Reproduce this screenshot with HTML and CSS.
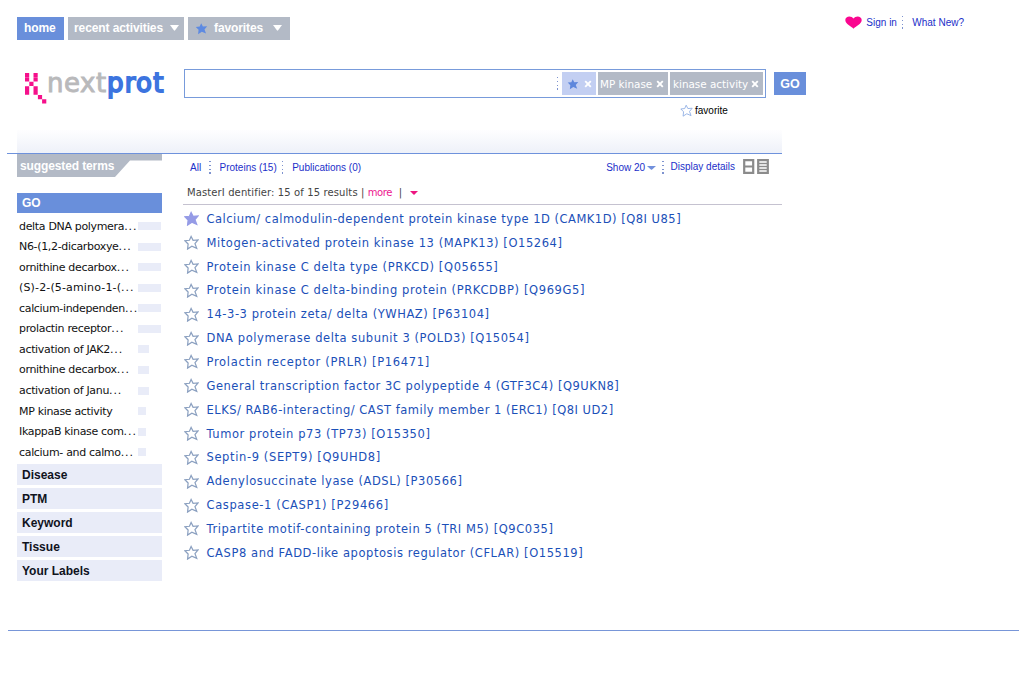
FILE: index.html
```html
<!DOCTYPE html>
<html lang="en">
<head>
<meta charset="utf-8">
<title>nextprot</title>
<link rel="stylesheet" href="styles.css">
</head>
<body>
<svg class="defs" width="0" height="0">
  <symbol id="star" viewBox="0 0 16 16"><path d="M7.6 1.5 9.7 5.6 15 5.2 11.7 9.2 13.6 14.3 8.4 12 3.8 15 4.4 9.6 1 6.1 5.8 5.6Z"/></symbol>
  <symbol id="cross" viewBox="0 0 8 8"><path d="M1.2 1.2 6.8 6.8M6.8 1.2 1.2 6.8"/></symbol>
  <symbol id="down" viewBox="0 0 10 6" preserveAspectRatio="none"><path d="M0 0H10L5.7 5.3Q5 6 4.3 5.3Z"/></symbol>
</svg>
<div class="top">
  <nav class="tabs">
    <a class="tab home">home</a>
    <a class="tab recent">recent activities<svg class="caret"><use href="#down"/></svg></a>
    <a class="tab favs"><svg class="tab-star"><use href="#star"/></svg>favorites<svg class="caret"><use href="#down"/></svg></a>
  </nav>
  <div class="account">
    <svg class="heart" viewBox="0 0 17 13"><path d="M8.5 12.7C6.5 10.6.3 8 .3 4.1.3-.2 6.5-.7 8.5 2.6 10.5-.7 16.7-.2 16.7 4.1 16.7 8 10.5 10.6 8.5 12.7Z"/></svg>
    <a class="signin">Sign in</a><i class="dots"></i><a class="whatnew">What New?</a>
  </div>
</div>
<header class="header">
  <div class="logo">
    <svg class="mark" viewBox="0 0 22 32"><path d="M0 0h4.2v4.2H0zM8.5 0h4.2v4.2h-4.2zM0 4.4h4.2v4.2H0zM8.5 4.4h4.2v4.2h-4.2zM4.3 8.8h4.2v4.2h-4.2zM0 13.2h4.2v4.2H0zM8.5 13.2h4.2v4.2h-4.2zM0 17.6h4.2v4.2H0zM8.5 17.6h4.2v4.2h-4.2zM12.9 22h4.2v4.2h-4.2zM17.1 26.2h4.2v4.2h-4.2z"/></svg>
    <span class="next">next</span><span class="prot">prot</span>
  </div>
  <div class="search">
    <div class="box">
      <i class="dots"></i>
      <span class="chip fav"><svg class="chip-star"><use href="#star"/></svg><svg class="x"><use href="#cross"/></svg></span>
      <span class="chip mp"><b>MP kinase</b><svg class="x"><use href="#cross"/></svg></span>
      <span class="chip ka"><b>kinase activity</b><svg class="x"><use href="#cross"/></svg></span>
    </div>
    <div class="favorite"><svg><use href="#star"/></svg>favorite</div>
  </div>
  <a class="go">GO</a>
</header>
<div class="band"></div>
<main class="main">
  <aside class="side">
    <div class="suggested"><svg viewBox="0 0 145 23"><path d="M0 0H145V6.5H113L98 23H0Z"/></svg><span>suggested terms</span></div>
    <h2 class="cat active">GO</h2>
    <ul class="terms">
      <li><span>delta DNA polymera<b>...</b></span><i class="bar l"></i></li>
      <li><span>N6-(1,2-dicarboxye<b>...</b></span><i class="bar l"></i></li>
      <li><span>ornithine decarbox<b>...</b></span><i class="bar l"></i></li>
      <li class="wide"><span>(S)-2-(5-amino-1-(<b>...</b></span><i class="bar l"></i></li>
      <li><span>calcium-independen<b>...</b></span><i class="bar l"></i></li>
      <li><span>prolactin receptor<b>...</b></span><i class="bar l"></i></li>
      <li><span>activation of JAK2<b>...</b></span><i class="bar m"></i></li>
      <li><span>ornithine decarbox<b>...</b></span><i class="bar m"></i></li>
      <li><span>activation of Janu<b>...</b></span><i class="bar m"></i></li>
      <li><span>MP kinase activity</span><i class="bar s"></i></li>
      <li><span>IkappaB kinase com<b>...</b></span><i class="bar s"></i></li>
      <li><span>calcium- and calmo<b>...</b></span><i class="bar s"></i></li>
    </ul>
    <h2 class="cat">Disease</h2>
    <h2 class="cat">PTM</h2>
    <h2 class="cat">Keyword</h2>
    <h2 class="cat">Tissue</h2>
    <h2 class="cat">Your Labels</h2>
  </aside>
  <section class="content">
    <div class="filters">
      <a>All</a><i class="dots d1"></i><a>Proteins (15)</a><i class="dots d2"></i><a>Publications (0)</a>
      <a class="show">Show 20</a><svg class="show-caret"><use href="#down"/></svg><i class="dots d3"></i><a class="details">Display details</a>
      <svg class="views" viewBox="0 0 26 15"><path d="M1.2 1.2H10.2V13.8H1.2ZM1.2 7.5H10.2M15.2 1.2H24.8V13.8H15.2Z"/><path class="thin" d="M15.2 4.5H24.8M15.2 7.5H24.8M15.2 10.5H24.8"/></svg>
    </div>
    <div class="summary">MasterI dentifier: 15 of 15 results | <em>more</em>  |<svg><use href="#down"/></svg></div>
    <ul class="results">
      <li class="on"><svg><use href="#star"/></svg><a>Calcium/ calmodulin-dependent protein kinase type 1D (CAMK1D) [Q8I U85]</a></li>
      <li><svg><use href="#star"/></svg><a>Mitogen-activated protein kinase 13 (MAPK13) [O15264]</a></li>
      <li><svg><use href="#star"/></svg><a>Protein kinase C delta type (PRKCD) [Q05655]</a></li>
      <li><svg><use href="#star"/></svg><a>Protein kinase C delta-binding protein (PRKCDBP) [Q969G5]</a></li>
      <li><svg><use href="#star"/></svg><a>14-3-3 protein zeta/ delta (YWHAZ) [P63104]</a></li>
      <li><svg><use href="#star"/></svg><a>DNA polymerase delta subunit 3 (POLD3) [Q15054]</a></li>
      <li><svg><use href="#star"/></svg><a>Prolactin receptor (PRLR) [P16471]</a></li>
      <li><svg><use href="#star"/></svg><a>General transcription factor 3C polypeptide 4 (GTF3C4) [Q9UKN8]</a></li>
      <li><svg><use href="#star"/></svg><a>ELKS/ RAB6-interacting/ CAST family member 1 (ERC1) [Q8I UD2]</a></li>
      <li><svg><use href="#star"/></svg><a>Tumor protein p73 (TP73) [O15350]</a></li>
      <li><svg><use href="#star"/></svg><a>Septin-9 (SEPT9) [Q9UHD8]</a></li>
      <li><svg><use href="#star"/></svg><a>Adenylosuccinate lyase (ADSL) [P30566]</a></li>
      <li><svg><use href="#star"/></svg><a>Caspase-1 (CASP1) [P29466]</a></li>
      <li><svg><use href="#star"/></svg><a>Tripartite motif-containing protein 5 (TRI M5) [Q9C035]</a></li>
      <li><svg><use href="#star"/></svg><a>CASP8 and FADD-like apoptosis regulator (CFLAR) [O15519]</a></li>
    </ul>
  </section>
</main>
<footer class="footer"></footer>
</body>
</html>
```

FILE: styles.css
```css
* { box-sizing: border-box; }
body { margin: 0; width: 1024px; height: 683px; overflow: hidden; background: #fff; font-family: "Liberation Sans", Arial, sans-serif; color: #111; }
ul, h2 { margin: 0; padding: 0; list-style: none; }
a, span, b { white-space: nowrap; }
svg { flex: none; display: block; }
.defs { position: absolute; }
.dots { flex: none; width: 1.4px; height: 13px; background: repeating-linear-gradient(#7e93cf 0 1.4px, transparent 1.4px 3.8px); }

.top { display: flex; justify-content: space-between; height: 69px; padding: 17px 60px 0 17px; }
.tabs { display: flex; height: 23px; gap: 4px; }
.tab { display: flex; align-items: center; padding: 0 0 1px 7px; background: #b3bac6; color: #fff; font-weight: bold; font-size: 12px; letter-spacing: -.1px; }
.home { width: 47px; background: #698fdb; }
.recent { width: 116px; padding-left: 6px; }
.favs { width: 102px; }
.caret { width: 9px; height: 6px; margin-left: auto; margin-right: 5px; fill: #fff; }
.favs .caret { margin-right: 8px; }
.tab-star { width: 13px; height: 13px; margin-right: 6px; fill: #5d8ae2; }
.account { display: flex; align-items: center; height: 11px; font-size: 10px; color: #1b2fc9; }
.heart { width: 17px; height: 13px; margin-right: 4px; fill: #fa0790; }
.account .dots { margin: 0 9px 0 5px; }

.header { display: flex; height: 61px; padding-left: 25px; }
.logo { display: flex; width: 159px; font: 26px/26px "DejaVu Sans", sans-serif; }
.mark { width: 22px; height: 32px; margin: 4px 0 0; fill: #f5108b; }
.next { width: 60px; color: #b9b9bb; -webkit-text-stroke: .9px #b9b9bb; letter-spacing: .5px; }
.prot { color: #3c74df; -webkit-text-stroke: 1.8px #3c74df; letter-spacing: 1.2px; }
.next, .prot { stroke-linejoin: round; padding-top: 1px; }
.search { width: 582px; }
.box { display: flex; align-items: center; justify-content: flex-end; height: 29px; padding-right: 2px; border: 1px solid #789bdb; gap: 2px; }
.box .dots { margin-right: 2px; }
.chip { display: flex; align-items: center; justify-content: space-between; height: 23px; padding: 0 4px 0 2px; background: #b3bac6; color: #fff; font: 10.4px "DejaVu Sans", sans-serif; }
.chip b { font-weight: normal; }
.fav { width: 34px; background: #c3cff2; padding-left: 5px; }
.mp { width: 70px; }
.ka { width: 93px; padding-left: 3px; }
.chip-star { width: 12px; height: 12px; fill: #5e87dc; }
.x { width: 8px; height: 8px; stroke: #fff; stroke-width: 1.9; }
.favorite { display: flex; align-items: center; height: 14px; margin: 5px 0 0 496px; font-size: 10px; color: #000; }
.favorite svg { width: 13px; height: 13px; margin-right: 2px; fill: #fff; stroke: #86a8e2; stroke-width: 1; }
.go { width: 32px; height: 23px; margin: 3px 0 0 8px; background: #698fdb; color: #fff; font: bold 12.5px/24px "Liberation Sans", sans-serif; text-align: center; }

.band { width: 775px; height: 24px; margin-left: 7px; border-bottom: 1px solid #6e92dc; background: linear-gradient(#fefeff, #eef1f9) 10px 0 no-repeat; }
.main { display: flex; height: 476px; padding-left: 17px; }
.side { width: 145px; margin-right: 21px; }
.suggested { display: grid; height: 23px; margin-bottom: 16px; }
.suggested > * { grid-area: 1 / 1; }
.suggested svg { width: 145px; height: 23px; fill: #b3bac6; }
.suggested span { padding-left: 3px; color: #fff; font: bold 12px/24px "Liberation Sans", sans-serif; letter-spacing: -.12px; }
.cat { height: 21px; margin-bottom: 3px; padding-left: 5px; background: #e9ecf8; font: bold 12px/23px "Liberation Sans", sans-serif; color: #10131d; }
.cat.active { height: 20px; margin: 0 0 3px; background: #698fdb; color: #fff; line-height: 21px; }
.terms { height: 248px; font: 11px "DejaVu Sans", sans-serif; letter-spacing: -.33px; color: #111; }
.terms li { display: flex; align-items: center; height: 20.54px; padding-left: 2px; }
.terms .wide { letter-spacing: .15px; }
.terms span { width: 119px; }
.terms b { font-weight: normal; letter-spacing: .9px; }
.bar { height: 8px; background: #e9ecf8; }
.bar.l { width: 23px; }
.bar.m { width: 11px; }
.bar.s { width: 7.5px; }

.content { width: 599px; }
.filters { display: flex; align-items: center; height: 27px; padding-left: 7px; font-size: 10px; color: #1b2fc9; }
.d1 { margin: 0 9px 0 8px; }
.d2 { margin: 0 9px 0 5px; }
.show { margin-left: auto; }
.show-caret { width: 9px; height: 4px; margin-left: 2px; fill: #7290dc; }
.d3 { margin: 0 7px 0 6px; }
.views { width: 26px; height: 15px; margin: -3px 13px 0 8px; fill: none; stroke: #8b8b8b; stroke-width: 2.2; }
.views .thin { stroke-width: 1.4; }
.details { margin-top: -2px; }
.summary { display: flex; align-items: center; height: 24px; padding-left: 4px; border-bottom: 1px solid #c5c2d0; font: 10px "DejaVu Sans", sans-serif; letter-spacing: .11px; color: #444; white-space: pre; }
.summary em { font-style: normal; color: #ed1590; letter-spacing: -.4px; }
.summary svg { width: 8px; height: 4px; margin-left: 8px; fill: #ed1580; }
.results { padding-top: 2px; font: 11.5px "DejaVu Sans", sans-serif; letter-spacing: .57px; color: #1b50b8; }
.results li { display: flex; align-items: center; height: 23.85px; padding-left: 1px; }
.results li:nth-child(1), .results li:nth-child(9) { letter-spacing: .5px; }
.results li:nth-child(8) { letter-spacing: .53px; }
.results li:nth-child(3), .results li:nth-child(4), .results li:nth-child(11), .results li:nth-child(13) { letter-spacing: .62px; }
.results li:nth-child(7) { letter-spacing: .69px; }
.results svg { width: 15px; height: 15px; margin-right: 7.5px; fill: #fff; stroke: #8ba0c0; stroke-width: 1.3; }
.results .on svg { fill: #959be6; stroke: #959be6; }
.footer { width: 1011px; margin-left: 8px; border-top: 1px solid #7896d8; }
```
